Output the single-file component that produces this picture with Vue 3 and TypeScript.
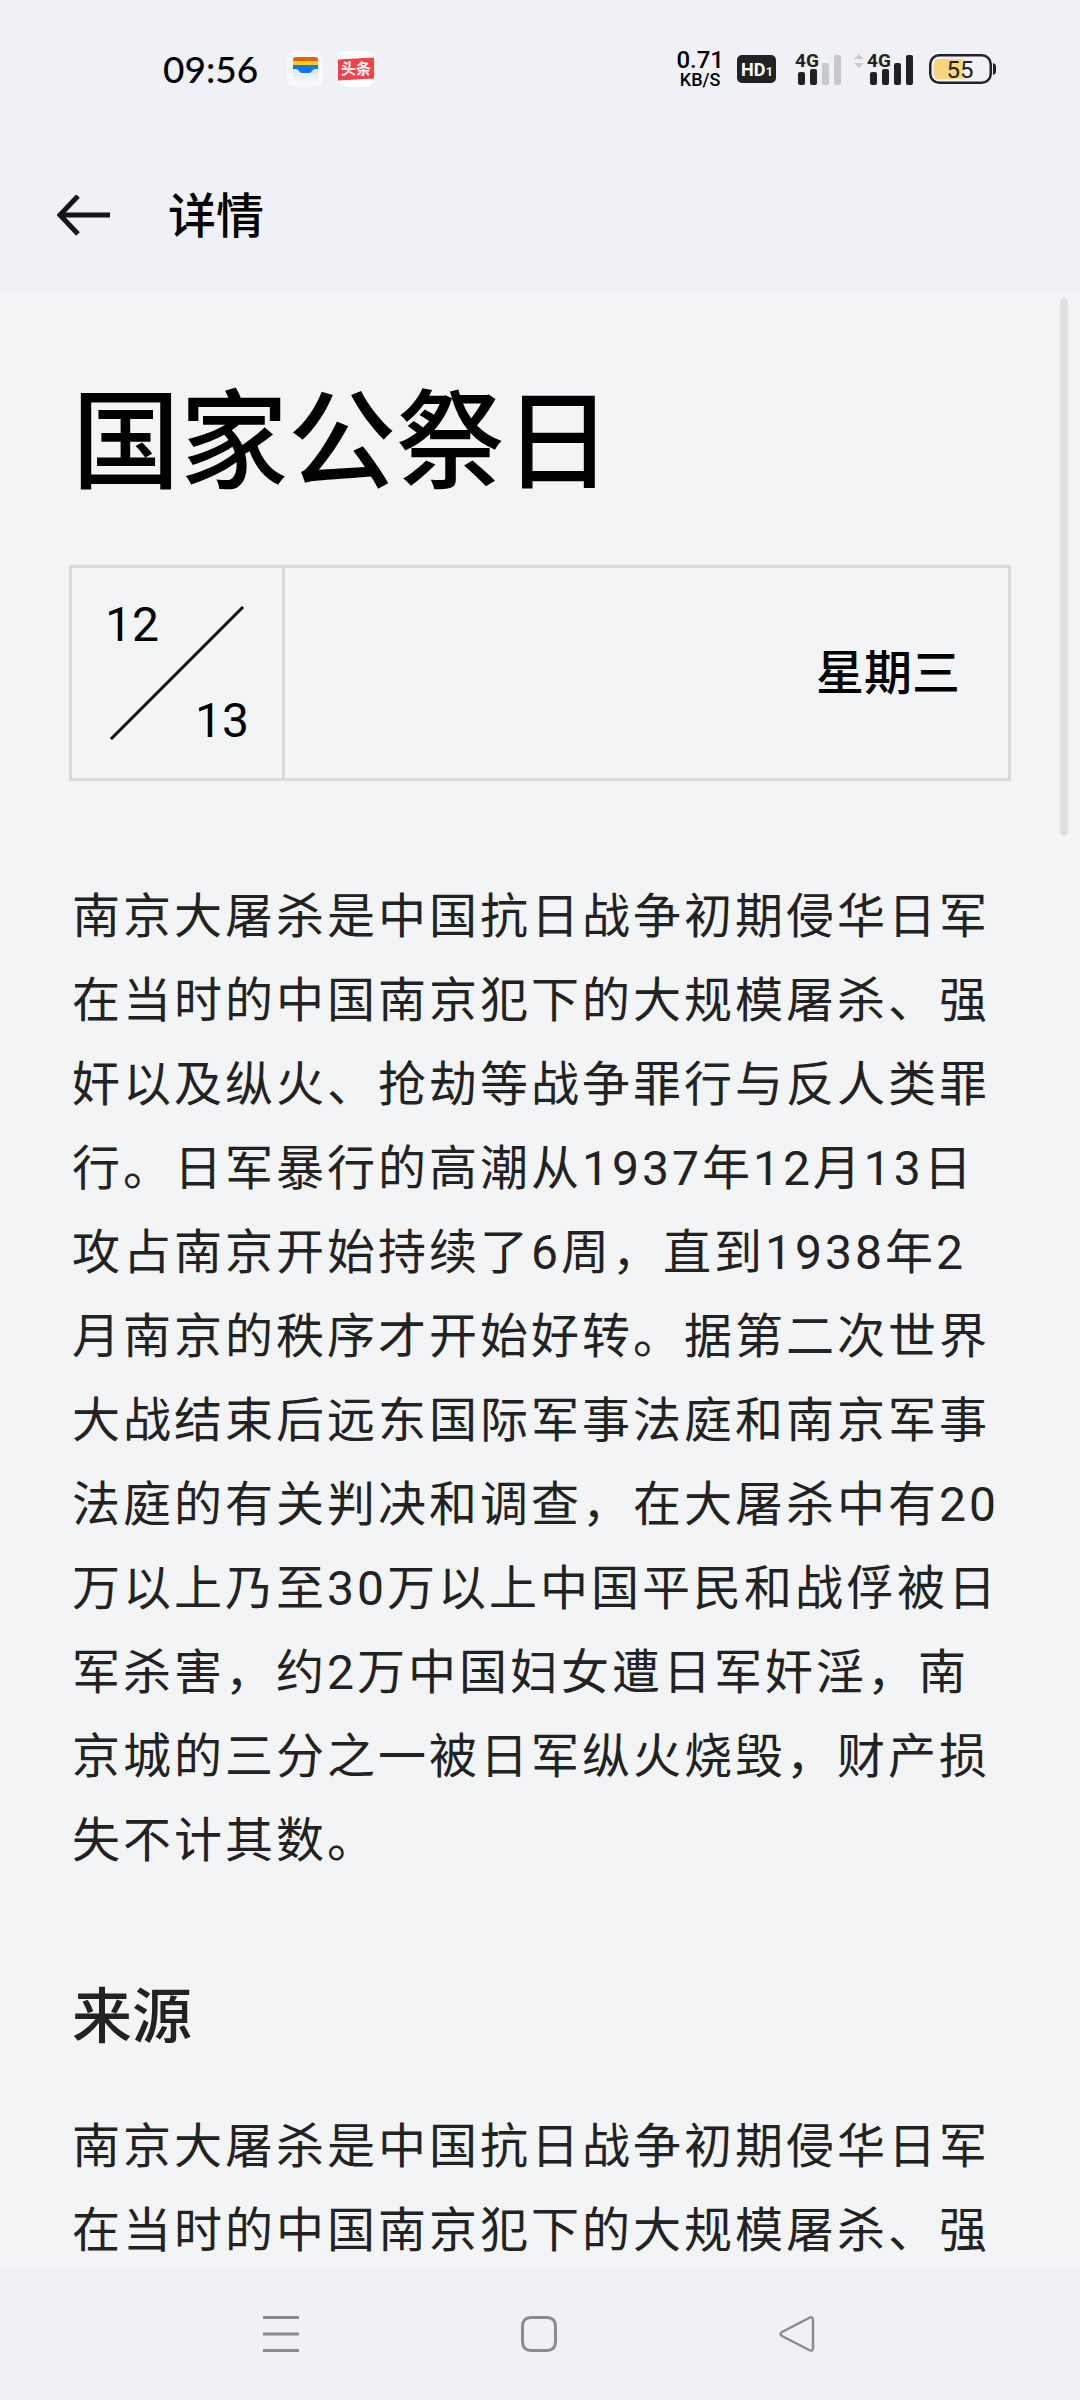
<script setup lang="ts">
interface DayDetail {
  title: string
  month: string
  day: string
  weekday: string
  body: string
  sourceTitle: string
  source: string
}

const detail: DayDetail = {
  title: '国家公祭日',
  month: '12',
  day: '13',
  weekday: '星期三',
  body:
    '南京大屠杀是中国抗日战争初期侵华日军在当时的中国南京犯下的大规模屠杀、强奸以及纵火、抢劫等战争罪行与反人类罪行。' +
    '日军暴行的高潮从1937年12月13日攻占南京开始持续了6周，直到1938年2月南京的秩序才开始好转。' +
    '据第二次世界大战结束后远东国际军事法庭和南京军事法庭的有关判决和调查，在大屠杀中有20万以上乃至30万以上中国平民和战俘被日军杀害，' +
    '约2万中国妇女遭日军奸淫，南京城的三分之一被日军纵火烧毁，财产损失不计其数。',
  sourceTitle: '来源',
  source: '南京大屠杀是中国抗日战争初期侵华日军在当时的中国南京犯下的大规模屠杀、强',
}
</script>

<template>
  <div class="screen">
    <div class="status">
      <div class="status-left">
        <time class="clock">09:56</time>
        <svg class="app-icon" viewBox="0 0 36 36" aria-hidden="true">
          <defs>
            <linearGradient id="pocket" x1="0" y1="0" x2="0" y2="1">
              <stop offset="0" stop-color="#cfe2fb" />
              <stop offset="1" stop-color="#f8f9fd" />
            </linearGradient>
          </defs>
          <rect width="36" height="36" rx="9" fill="#f8f9fc" />
          <rect x="6" y="16" width="25" height="15" rx="3" fill="url(#pocket)" />
          <path d="M6 12V9q0-3 3-3h19q3 0 3 3v3z" fill="#e85f12" />
          <rect x="6" y="10" width="25" height="5" fill="#fccd10" />
          <path d="M6 14h25v4h-3q-2 0-3 2t-3 2h-7q-2 0-3-2t-3-2H6z" fill="#0f77f2" />
        </svg>
        <svg class="app-icon news" viewBox="0 0 38 36" aria-hidden="true">
          <rect x="1" width="36" height="36" rx="9" fill="#fff" />
          <path d="M1 8.500L37 6.500V27.500L1 29.500z" fill="#f0424b" />
          <text x="19" y="23" text-anchor="middle" font-size="15" font-weight="700" fill="#fff">头条</text>
        </svg>
      </div>
      <div class="status-right">
        <div class="speed"><span class="rate">0.71</span><span class="unit">KB/S</span></div>
        <svg class="hd" viewBox="0 0 39 28" aria-label="HD1">
          <rect width="39" height="28" rx="5" fill="#222" />
          <text x="4" y="21" font-size="18" font-weight="700" fill="#fff">HD</text>
          <text x="29" y="21" font-size="12" font-weight="700" fill="#fff">1</text>
        </svg>
        <svg class="signal" viewBox="0 -4 47 42" aria-label="4G">
          <text x="0" y="15" font-size="19" font-weight="700" fill="#222">4G</text>
          <g fill="#222">
            <rect x="3" y="20" width="7" height="13" rx="2" />
            <rect x="15" y="17" width="7" height="16" rx="2" />
          </g>
          <g fill="#c8c9cd">
            <rect x="27" y="11" width="7" height="22" rx="2" />
            <rect x="39" y="3" width="7" height="30" rx="2" />
          </g>
        </svg>
        <svg class="signal second" viewBox="0 -4 60 42" aria-label="4G">
          <path d="M0 7l5-5 5 5zM0 11l5 5 5-5z" fill="#c8c9cd" />
          <text x="13" y="15" font-size="19" font-weight="700" fill="#222">4G</text>
          <g fill="#222">
            <rect x="16" y="20" width="7" height="13" rx="2" />
            <rect x="28" y="17" width="7" height="16" rx="2" />
            <rect x="40" y="11" width="7" height="22" rx="2" />
            <rect x="52" y="3" width="7" height="30" rx="2" />
          </g>
        </svg>
        <svg class="battery" viewBox="0 0 67 30" aria-label="55">
          <rect x="1.250" y="1.250" width="60.500" height="27.500" rx="9" fill="none" stroke="#222" stroke-width="2.500" />
          <path d="M34 5H10q-5 0-5 5v10q0 5 5 5h24z" fill="#f9d57b" />
          <path d="M64 9q3 1 3 3v6q0 2-3 3z" fill="#222" />
          <text x="31" y="24" text-anchor="middle" font-size="24" fill="#222">55</text>
        </svg>
      </div>
    </div>

    <header class="topbar">
      <button class="back" type="button" aria-label="返回">
        <svg viewBox="0 0 54 42" aria-hidden="true">
          <path d="M21 1L3 20L21 39M3 20H53" fill="none" stroke="#161616" stroke-width="5" />
        </svg>
      </button>
      <span class="heading">详情</span>
    </header>

    <main class="content">
      <article class="article">
        <h1>{{ detail.title }}</h1>
        <div class="date-card">
          <div class="date">
            <svg class="slash" viewBox="0 0 210 210" aria-hidden="true">
              <path d="M39 171L171 39" stroke="#000" stroke-width="3" />
            </svg>
            <span>{{ detail.month }}</span>
            <span class="day">{{ detail.day }}</span>
          </div>
          <div class="weekday">{{ detail.weekday }}</div>
        </div>
        <p>{{ detail.body }}</p>
        <h2>{{ detail.sourceTitle }}</h2>
        <p>{{ detail.source }}</p>
      </article>
      <div class="thumb"></div>
    </main>

    <nav class="navbar">
      <button type="button" aria-label="最近任务">
        <svg viewBox="0 0 36 36" aria-hidden="true">
          <path d="M0 1.500h36M0 18h36M0 34.500h36" stroke="#8b8b8e" stroke-width="3" />
        </svg>
      </button>
      <button type="button" aria-label="主屏幕">
        <svg viewBox="0 0 36 36" aria-hidden="true">
          <path d="M10 1.500h16q8.500 0 8.500 9v15q0 9-8.500 9H10q-8.500 0-8.500-9v-15q0-9 8.500-9z" fill="none" stroke="#8b8b8e" stroke-width="3" />
        </svg>
      </button>
      <button type="button" aria-label="返回上一页">
        <svg viewBox="0 0 36 36" aria-hidden="true">
          <path d="M30 2L3 16q-3 2 0 4L30 34q4 2 4-2V4q0-4-4-2z" fill="none" stroke="#8b8b8e" stroke-width="2.500" />
        </svg>
      </button>
    </nav>
  </div>
</template>

<style>
body {
  margin: 0;
  background: #f0f1f6;
}
</style>

<style scoped>
.screen {
  display: flex;
  flex-direction: column;
  height: 100vh;
  background: #f0f1f6;
  color: #000;
  font-family: Roboto, "Noto Sans CJK SC", sans-serif;
  text-autospace: no-autospace;
  text-spacing-trim: space-all;
}

button {
  display: flex;
  align-items: center;
  justify-content: center;
  padding: 0;
  border: 0;
  background: none;
}

.status {
  display: flex;
  flex: none;
  align-items: center;
  justify-content: space-between;
  height: 138px;
  padding: 0 84px 0 163px;
}

.status-left,
.status-right {
  display: flex;
  align-items: center;
}

.clock {
  font: 500 37px/48px Lato, sans-serif;
}

.app-icon {
  width: 36px;
  height: 36px;
  margin-left: 29px;
}

.news {
  width: 38px;
  margin-left: 14px;
}

.speed {
  display: flex;
  flex-direction: column;
  align-items: center;
  font-weight: 500;
}

.rate {
  font-size: 24px;
  line-height: 22px;
}

.unit {
  font-size: 18px;
  line-height: 18px;
}

.hd {
  width: 39px;
  height: 28px;
  margin-left: 13px;
}

.signal {
  width: 47px;
  height: 42px;
  margin-left: 19px;
}

.second {
  width: 60px;
  margin-left: 12px;
}

.battery {
  width: 67px;
  height: 30px;
  margin-left: 15px;
}

.topbar {
  display: flex;
  flex: none;
  align-items: center;
  gap: 57px;
  height: 156px;
  padding: 0 57px;
}

.back svg {
  width: 54px;
  height: 42px;
}

.heading {
  padding-top: 2px;
  font-size: 48px;
  font-weight: 500;
  line-height: 60px;
}

.content {
  position: relative;
  flex: 1;
  min-height: 0;
  overflow: hidden;
  background: #f3f4f6;
}

.article {
  padding: 89px 69px 0;
}

h1 {
  margin: 0 3px 62px;
  font-size: 108px;
  font-weight: 500;
  line-height: 120px;
}

.date-card {
  display: flex;
  margin-bottom: 94px;
  border: 3px solid #d9dadc;
  font-size: 48px;
  line-height: 48px;
}

.date {
  position: relative;
  display: flex;
  flex-direction: column;
  justify-content: space-between;
  box-sizing: border-box;
  width: 213px;
  height: 210px;
  padding: 33px;
  border-right: 3px solid #d9dadc;
}

.day {
  align-self: flex-end;
}

.slash {
  position: absolute;
  inset: 0;
}

.weekday {
  display: flex;
  flex: 1;
  align-items: center;
  justify-content: flex-end;
  padding: 2px 48px 0 0;
  font-weight: 500;
}

p {
  margin: 0 3px;
  color: #222;
  font-size: 48px;
  line-height: 84px;
  letter-spacing: 3px;
}

h2 {
  margin: 93px 3px 45px;
  color: #222;
  font-size: 60px;
  font-weight: 500;
  line-height: 84px;
}

.thumb {
  position: absolute;
  top: 4px;
  right: 12px;
  width: 8px;
  height: 538px;
  border-radius: 4px;
  background: #dedfe1;
}

.navbar {
  display: flex;
  flex: none;
  justify-content: center;
  height: 132px;
  padding-right: 2px;
}

.navbar button {
  width: 258px;
}

.navbar svg {
  width: 36px;
  height: 36px;
}
</style>
